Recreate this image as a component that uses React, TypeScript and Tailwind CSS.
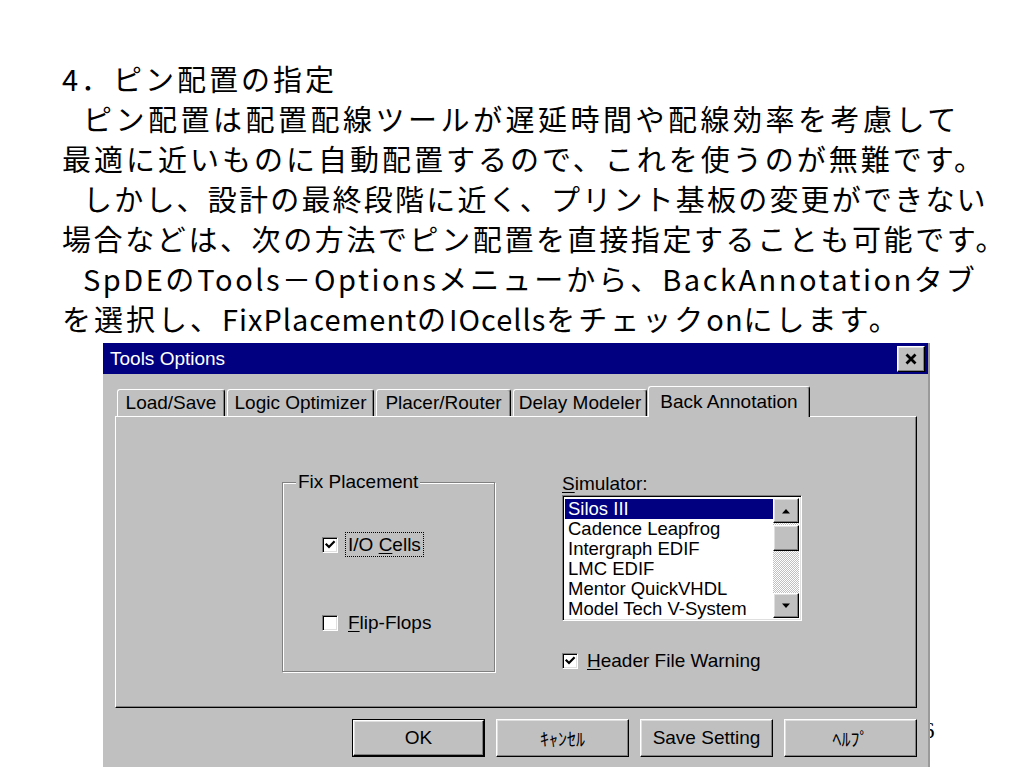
import React from "react";

const raised =
  "border border-t-white border-l-white border-r-black border-b-black shadow-[inset_-1px_-1px_0_#808080,inset_1px_1px_0_#dfdfdf] bg-[#c0c0c0]";
const sunken =
  "border border-t-[#808080] border-l-[#808080] border-r-white border-b-white shadow-[inset_1px_1px_0_#000,inset_-1px_-1px_0_#dfdfdf]";

function Check({ checked }: { checked: boolean }) {
  return (
    <div className={"w-[16px] h-[16px] bg-white shrink-0 flex items-center justify-center " + sunken}>
      {checked && (
        <svg width="12" height="12" viewBox="0 0 12 12">
          <path d="M2.5 5.5 L5 8 L9.8 3" fill="none" stroke="#000" strokeWidth="2.2" strokeLinecap="square" />
        </svg>
      )}
    </div>
  );
}

function Tab({ label, className, selected }: { label: string; className: string; selected?: boolean }) {
  return (
    <div
      className={
        "flex items-center justify-center bg-[#c0c0c0] border-l border-t border-l-white border-t-white border-r border-r-black rounded-t-[3px] shadow-[inset_-1px_0_0_#808080] " +
        (selected ? "h-[31px] -mb-[1px] relative z-10 " : "h-[27px] ") +
        className
      }
    >
      <span className="leading-[20px]">{label}</span>
    </div>
  );
}

function Arrow({ up }: { up?: boolean }) {
  return (
    <svg width="10" height="6" viewBox="0 0 10 6">
      {up ? <polygon points="1,5.5 9,5.5 5,1" fill="#000" /> : <polygon points="1,0.5 9,0.5 5,5" fill="#000" />}
    </svg>
  );
}

export default function App() {
  const items = ["Silos III", "Cadence Leapfrog", "Intergraph EDIF", "LMC EDIF", "Mentor QuickVHDL", "Model Tech V-System"];
  return (
    <div className="relative w-[1024px] h-[768px] overflow-hidden bg-white">
      <div className="pt-[58px] pl-[62px] font-['Noto_Sans_CJK_JP',sans-serif] text-[29px] leading-[40px] text-black whitespace-nowrap">
        <div className="tracking-[3px]">4．ピン配置の指定</div>
        <div className="pl-[21px] tracking-[3.5px]">ピン配置は配置配線ツールが遅延時間や配線効率を考慮して</div>
        <div className="tracking-[3px]">最適に近いものに自動配置するので、これを使うのが無難です。</div>
        <div className="pl-[21px] tracking-[2.2px]">しかし、設計の最終段階に近く、プリント基板の変更ができない</div>
        <div className="tracking-[2.6px]">場合などは、次の方法でピン配置を直接指定することも可能です。</div>
        <div className="pl-[21px] tracking-[3px]">
          <span className="tracking-[2.5px]">SpDE</span>の<span className="tracking-[2.5px]">Tools</span>－
          <span className="tracking-[2.5px]">Options</span>メニューから、<span className="tracking-[2.5px]">BackAnnotation</span>タブ
        </div>
        <div className="tracking-[3px]">
          を選択し、<span className="tracking-[1px]">FixPlacement</span>の<span className="tracking-[1px]">IOcells</span>をチェック
          <span className="tracking-[1px]">on</span>にします。
        </div>
      </div>

      <span className="absolute left-[923px] top-[714px] font-['Liberation_Serif',serif] text-[23px] text-black">6</span>

      <div className="relative z-10 ml-[103px] mt-[5px] w-[827px] bg-[#c0c0c0] border-r-2 border-r-[#9a9a9a] font-['Liberation_Sans',Arial,sans-serif] text-[19px] text-black">
        <div className="h-[31px] bg-[#000080] flex items-center justify-between pl-[7px] pr-[3px]">
          <span className="text-white leading-[20px]">Tools Options</span>
          <div className={"w-[28px] h-[26px] flex items-center justify-center " + raised}>
            <svg width="14" height="12" viewBox="0 0 14 12">
              <path d="M2.5 1.5 L11.5 10.5 M11.5 1.5 L2.5 10.5" stroke="#000" strokeWidth="2.8" />
            </svg>
          </div>
        </div>

        <div className="pl-[12px] pr-[11px] pt-[12px] pb-[10px]">
          <div className="flex items-end h-[30px] pl-[2px] gap-[2px]">
            <Tab label="Load/Save" className="w-[108px]" />
            <Tab label="Logic Optimizer" className="w-[147px]" />
            <Tab label="Placer/Router" className="w-[135px]" />
            <Tab label="Delay Modeler" className="w-[134px]" />
            <Tab label="Back Annotation" className="w-[162px] -ml-[1px]" selected />
          </div>

          <div className="h-[292px] border border-t-white border-l-white border-r-black border-b-black shadow-[inset_-1px_-1px_0_#808080] flex">
            <div className="ml-[166px] mt-[65px] w-[213px] h-[190px] relative border border-[#808080] shadow-[1px_1px_0_#fff,inset_1px_1px_0_#fff] flex flex-col pt-[49px] pl-[39px]">
              <span className="absolute left-[13px] -top-[11px] bg-[#c0c0c0] px-[2px] leading-[20px]">Fix Placement</span>
              <div className="flex items-center h-[25px]">
                <Check checked />
                <span className="ml-[7px] h-[25px] flex items-center px-[2px] border border-dotted border-black">
                  <span className="leading-[20px]">
                    I/O <span className="underline underline-offset-2">C</span>ells
                  </span>
                </span>
              </div>
              <div className="flex items-center h-[25px] mt-[53px]">
                <Check checked={false} />
                <span className="ml-[7px] h-[25px] flex items-center px-[2px] border border-transparent">
                  <span className="leading-[20px]">
                    <span className="underline underline-offset-2">F</span>lip-Flops
                  </span>
                </span>
              </div>
            </div>

            <div className="ml-[67px] mt-[57px] flex flex-col">
              <div className="leading-[20px]">
                <span className="underline underline-offset-2">S</span>imulator:
              </div>
              <div className={"mt-[1px] w-[240px] h-[126px] bg-white flex p-[2px] " + sunken}>
                <div className="flex-1 flex flex-col pt-[1px] text-[18.5px]">
                  {items.map((it, i) => (
                    <div
                      key={it}
                      className={
                        "h-[20px] leading-[20px] px-[3px] whitespace-nowrap " +
                        (i === 0 ? "bg-[#000080] text-white" : "text-black")
                      }
                    >
                      {it}
                    </div>
                  ))}
                </div>
                <div className="w-[26px] flex flex-col">
                  <div className={"h-[25px] flex items-center justify-center " + raised}>
                    <Arrow up />
                  </div>
                  <div className="h-[2px] bg-[repeating-conic-gradient(#c0c0c0_0_25%,#ffffff_0_50%)] bg-[length:2px_2px]" />
                  <div className={"h-[26px] " + raised} />
                  <div className="flex-1 bg-[repeating-conic-gradient(#c0c0c0_0_25%,#ffffff_0_50%)] bg-[length:2px_2px]" />
                  <div className={"h-[25px] flex items-center justify-center " + raised}>
                    <Arrow />
                  </div>
                </div>
              </div>
              <div className="mt-[30px] flex items-center h-[20px]">
                <Check checked />
                <span className="ml-[9px] leading-[20px]">
                  <span className="underline underline-offset-2">H</span>eader File Warning
                </span>
              </div>
            </div>
          </div>

          <div className="mt-[11px] flex justify-end gap-[11px]">
            <div className="w-[133px] h-[38px] border border-black">
              <div className={"w-full h-full flex items-center justify-center " + raised}>OK</div>
            </div>
            <div className={"w-[133px] h-[38px] flex items-center justify-center font-['Noto_Sans_CJK_JP',sans-serif] text-[18px] " + raised}>
              ｷｬﾝｾﾙ
            </div>
            <div className={"w-[133px] h-[38px] flex items-center justify-center " + raised}>Save Setting</div>
            <div className={"w-[133px] h-[38px] flex items-center justify-center font-['Noto_Sans_CJK_JP',sans-serif] text-[18px] " + raised}>
              ﾍﾙﾌﾟ
            </div>
          </div>
        </div>
      </div>
    </div>
  );
}
